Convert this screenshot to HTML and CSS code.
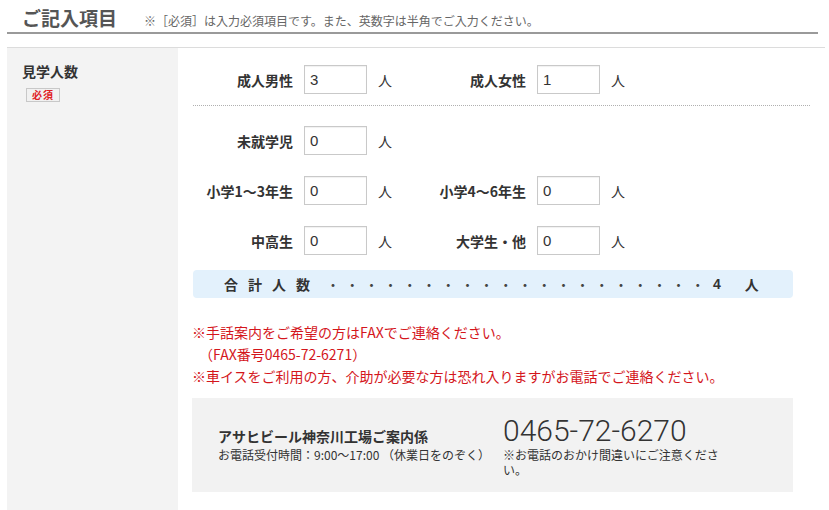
FILE: index.html
```html
<!DOCTYPE html>
<html lang="ja">
<head>
<meta charset="utf-8">
<title>ご記入項目</title>
<link rel="stylesheet" href="styles.css">
</head>
<body>
<div class="page">
  <div class="heading">
    <h2 class="heading-title">ご記入項目</h2>
    <span class="heading-note">※［必須］は入力必須項目です。また、英数字は半角でご入力ください。</span>
  </div>

  <div class="form-table">
    <div class="form-th">
      <div class="th-label">見学人数</div>
      <span class="badge">必須</span>
    </div>
    <div class="form-td">
      <div class="row row-first">
        <div class="group">
          <label class="g-label">成人男性</label>
          <input class="g-input" type="text" value="3">
          <span class="g-unit">人</span>
        </div>
        <div class="group">
          <label class="g-label">成人女性</label>
          <input class="g-input" type="text" value="1">
          <span class="g-unit">人</span>
        </div>
      </div>
      <div class="rows-rest">
        <div class="row">
          <div class="group">
            <label class="g-label">未就学児</label>
            <input class="g-input" type="text" value="0">
            <span class="g-unit">人</span>
          </div>
        </div>
        <div class="row">
          <div class="group">
            <label class="g-label">小学1〜3年生</label>
            <input class="g-input" type="text" value="0">
            <span class="g-unit">人</span>
          </div>
          <div class="group">
            <label class="g-label">小学4〜6年生</label>
            <input class="g-input" type="text" value="0">
            <span class="g-unit">人</span>
          </div>
        </div>
        <div class="row">
          <div class="group">
            <label class="g-label">中高生</label>
            <input class="g-input" type="text" value="0">
            <span class="g-unit">人</span>
          </div>
          <div class="group">
            <label class="g-label">大学生・他</label>
            <input class="g-input" type="text" value="0">
            <span class="g-unit">人</span>
          </div>
        </div>
      </div>

      <div class="total">
        <span class="total-label">合計人数</span><span class="total-dots">・・・・・・・・・・・・・・・・・・・・</span><span class="total-num">4</span><span class="total-unit">人</span>
      </div>

      <div class="notes">
        <p>※手話案内をご希望の方はFAXでご連絡ください。</p>
        <p>　（FAX番号0465-72-6271）</p>
        <p>※車イスをご利用の方、介助が必要な方は恐れ入りますがお電話でご連絡ください。</p>
      </div>

      <div class="contact">
        <div class="contact-left">
          <div class="contact-name">アサヒビール神奈川工場ご案内係</div>
          <div class="contact-hours">お電話受付時間：9:00〜17:00 （休業日をのぞく）</div>
        </div>
        <div class="contact-right">
          <div class="contact-tel">0465-72-6270</div>
          <div class="contact-note">※お電話のおかけ間違いにご注意ください。</div>
        </div>
      </div>
    </div>
  </div>
</div>
</body>
</html>
```

FILE: styles.css
```css
* { box-sizing: border-box; }

html, body {
  margin: 0;
  padding: 0;
  background: #fff;
}

body {
  font-family: "Noto Sans CJK JP", "Noto Sans", sans-serif;
  color: #333;
}

.page {
  width: 818px;
  margin-left: 7px;
}

.heading {
  display: flex;
  align-items: baseline;
  padding: 4px 0 0 15px;
  height: 34px;
  border-bottom: 2px solid #9a9a9a;
  margin-right: 7px;
}

.heading-title {
  margin: 0;
  font-size: 19px;
  line-height: 28px;
  font-weight: bold;
  color: #555;
}

.heading-note {
  margin-left: 27px;
  font-size: 12px;
  color: #666;
}

.form-table {
  margin-top: 13px;
  border-top: 1px solid #dcdcdc;
  display: flex;
  min-height: 470px;
}

.form-th {
  width: 171px;
  flex: none;
  background: #f3f3f3;
  padding: 14px 0 0 15px;
}

.th-label {
  font-size: 14px;
  line-height: 18px;
  font-weight: bold;
  color: #333;
}

.badge {
  display: inline-block;
  margin: 3px 0 0 4px;
  width: 34px;
  height: 14px;
  border: 1px solid #c8c8c8;
  background: #f1f1f1;
  color: #e0201f;
  font-size: 10px;
  font-weight: bold;
  line-height: 12px;
  text-align: center;
  letter-spacing: 1px;
}

.form-td {
  flex: 1;
  padding: 17px 15px 20px 15px;
}

.row {
  display: flex;
  height: 29px;
  align-items: center;
}

.row-first {
  height: auto;
  padding-bottom: 11px;
  border-bottom: 1px dotted #b0b0b0;
}

.rows-rest {
  padding-top: 20px;
  display: flex;
  flex-direction: column;
  gap: 21px;
}

.group {
  width: 233px;
  display: flex;
  align-items: center;
}

.g-label {
  width: 100px;
  text-align: right;
  font-size: 14px;
  font-weight: bold;
  color: #333;
  margin-right: 11px;
}

.g-input {
  width: 63px;
  height: 29px;
  border: 1px solid #c9c9c9;
  box-shadow: inset 0 1px 1px rgba(0,0,0,0.06);
  padding: 0 0 0 5px;
  font-family: "Liberation Sans", sans-serif;
  font-size: 15px;
  color: #333;
  background: #fff;
  margin: 0;
}

.g-unit {
  margin-left: 11px;
  font-size: 14px;
  color: #333;
}

.total {
  margin-top: 15px;
  width: 600px;
  height: 28px;
  background: #e3f1fc;
  border-radius: 4px;
  display: flex;
  align-items: center;
  padding-left: 31px;
  font-size: 14px;
  font-weight: bold;
  color: #333;
}

.total-label {
  letter-spacing: 10px;
}

.total-dots {
  margin-left: 6px;
  letter-spacing: 5.2px;
  color: #444;
  font-weight: normal;
}

.total-num {
  margin-left: 3px;
  font-family: "Liberation Sans", sans-serif;
}

.total-unit {
  margin-left: 24px;
}

.notes {
  margin-top: 23px;
  margin-left: -1px;
  color: #d4161c;
  font-size: 14px;
  line-height: 22px;
}

.notes p {
  margin: 0;
}

.contact {
  margin-top: 11px;
  margin-left: -1px;
  width: 601px;
  height: 94px;
  background: #f2f2f2;
  display: flex;
  align-items: center;
  padding-left: 26px;
}

.contact-left {
  width: 285px;
  flex: none;
}

.contact-name {
  font-size: 14px;
  line-height: 19px;
  font-weight: bold;
  color: #333;
}

.contact-hours {
  font-size: 12px;
  line-height: 18px;
  color: #333;
}

.contact-tel {
  font-family: Roboto, "Liberation Sans", sans-serif;
  font-weight: 300;
  font-size: 30px;
  line-height: 33px;
  color: #333;
}

.contact-note {
  width: 220px;
  font-size: 12px;
  line-height: 15px;
  color: #333;
}
```
